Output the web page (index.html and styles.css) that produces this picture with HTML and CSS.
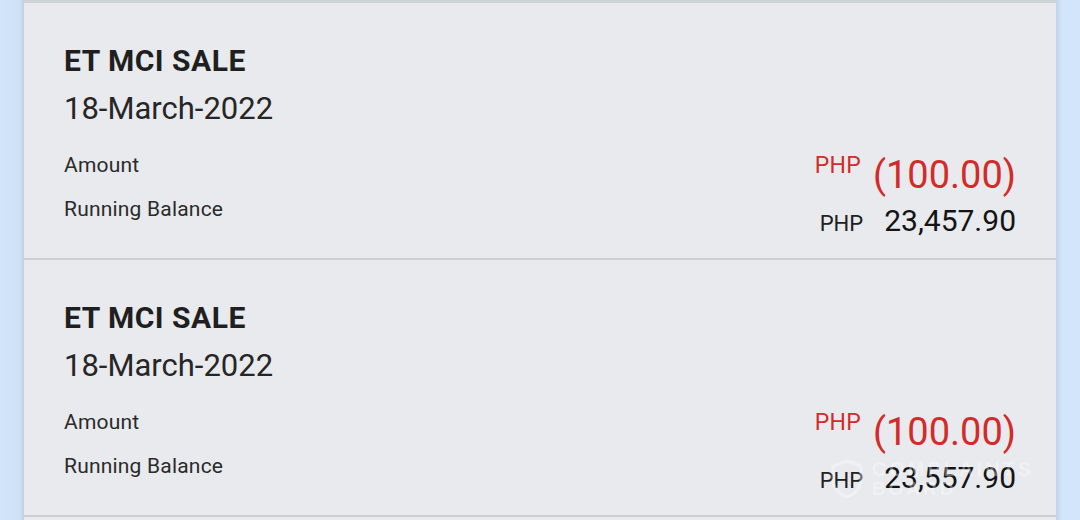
FILE: index.html
```html
<!DOCTYPE html>
<html>
<head>
<meta charset="utf-8">
<link rel="stylesheet" href="styles.css">
</head>
<body>
<div class="page">
  <div class="list">
    <div class="card">
      <div class="title">ET MCI SALE</div>
      <div class="date">18-March-2022</div>
      <div class="details">
        <div class="labels">
          <div class="label">Amount</div>
          <div class="label second">Running Balance</div>
        </div>
        <div class="values">
          <div class="row amount">
            <span class="cur red">PHP</span>
            <span class="big red">(100.00)</span>
          </div>
          <div class="row balance">
            <span class="cur">PHP</span>
            <span class="num">23,457.90</span>
          </div>
        </div>
      </div>
    </div>
    <div class="card">
      <div class="title">ET MCI SALE</div>
      <div class="date">18-March-2022</div>
      <div class="details">
        <div class="labels">
          <div class="label">Amount</div>
          <div class="label second">Running Balance</div>
        </div>
        <div class="values">
          <div class="row amount">
            <span class="cur red">PHP</span>
            <span class="big red">(100.00)</span>
          </div>
          <div class="row balance">
            <span class="cur">PHP</span>
            <span class="num">23,557.90</span>
          </div>
        </div>
      </div>
      <div class="watermark">
        <svg class="wm-icon" width="34" height="40" viewBox="0 0 34 40"><path d="M17 2 L31 7 V20 C31 29 24 35 17 38 C10 35 3 29 3 20 V7 Z" fill="none" stroke="currentColor" stroke-width="3"/></svg>
        <div class="wm-text"><span class="wm1">COMPLAINTS</span><span class="wm2">BOARD</span></div>
      </div>
    </div>
  </div>
</div>
</body>
</html>
```
FILE: styles.css
```css
html, body {
  margin: 0;
  padding: 0;
}
body {
  background: #d2e5fb;
  font-family: Roboto, "Noto Sans", sans-serif;
  color: #212121;
  width: 1080px;
  height: 520px;
  overflow: hidden;
}
.page {
  display: flex;
  padding: 0 24px;
  height: 520px;
  box-sizing: border-box;
  background: linear-gradient(90deg, #d2e5fb 0, #cde0f6 20px, #bccfe3 24px, transparent 24px, transparent 1056px, #c0d3e8 1056px, #d2e5fb 1062px);
}
.list {
  flex: 1;
  background: #e8eaed;
  border-top: 3px solid #cfd2d7;
}
.card {
  position: relative;
  height: 257px;
  box-sizing: border-box;
  padding: 41px 40px 0 40px;
  border-bottom: 2px solid #cbced3;
  display: flex;
  flex-direction: column;
}
.title {
  font-size: 30px;
  line-height: 34px;
  font-weight: 700;
  letter-spacing: 0.5px;
  color: #1f1f1f;
}
.date {
  margin-top: 13px;
  font-size: 31px;
  line-height: 36px;
  color: #262626;
}
.details {
  margin-top: 26px;
  display: flex;
  justify-content: space-between;
}
.label {
  font-size: 21px;
  line-height: 24px;
  letter-spacing: 0.2px;
  color: #2b2b2b;
}
.label.second {
  margin-top: 20px;
}
.values {
  display: flex;
  flex-direction: column;
  align-items: flex-end;
}
.row {
  display: flex;
}
.row.amount {
  gap: 12px;
  align-items: flex-start;
}
.row.balance {
  gap: 21px;
  align-items: baseline;
  margin-top: 6px;
}
.red {
  color: #d32a2a;
}
.cur {
  font-size: 22px;
  line-height: 26px;
}
.cur.red {
  font-size: 23px;
  letter-spacing: 0.3px;
}
.big {
  font-size: 38px;
  line-height: 44px;
}
.num {
  font-size: 30px;
  line-height: 36px;
  color: #141414;
}
.watermark {
  position: absolute;
  right: 22px;
  bottom: 16px;
  display: flex;
  align-items: center;
  gap: 8px;
  color: rgba(255, 255, 255, 0.35);
  pointer-events: none;
}
.wm-text {
  display: flex;
  flex-direction: column;
  font-family: "Liberation Sans", sans-serif;
  font-weight: 700;
  letter-spacing: 3px;
  line-height: 20px;
  font-size: 20px;
}
.wm2 {
  font-size: 19px;
}
```
